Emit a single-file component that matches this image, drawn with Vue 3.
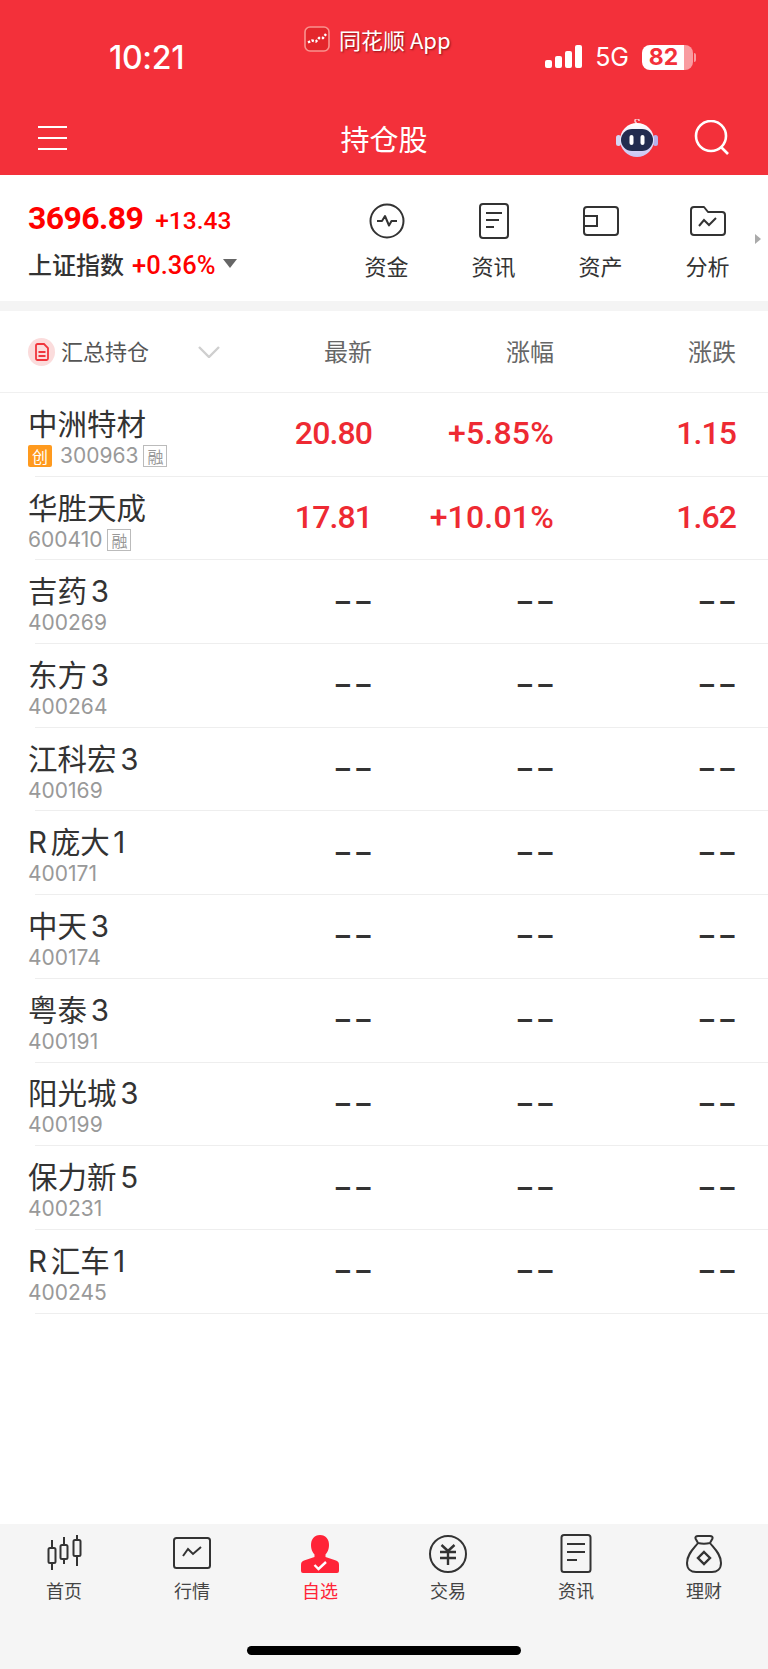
<template>
  <div class="page">
    <!-- 顶部红色区域 -->
    <header class="top">
      <div class="status">
        <span class="time">10:21</span>
        <div class="status-right">
          <svg width="38" height="24" viewBox="0 0 38 24">
            <rect x="0" y="15" width="7" height="8" rx="2" fill="#fff" />
            <rect x="10" y="11" width="7" height="12" rx="2" fill="#fff" />
            <rect x="20" y="6" width="7" height="17" rx="2" fill="#fff" />
            <rect x="30" y="0" width="7" height="23" rx="2" fill="#fff" />
          </svg>
          <span class="net">5G</span>
          <div class="battery">
            <div class="battery-body"><span class="battery-num">82</span></div>
            <i class="battery-cap"></i>
          </div>
        </div>
      </div>
      <div class="from-app">
        <svg width="26" height="26" viewBox="0 0 26 26">
          <rect x="1" y="1" width="24" height="24" rx="5" fill="#e4262c" stroke="#f9938f" stroke-width="1.6" />
          <path d="M4 16.5 8 14.5 12 15.5 15 12 19 12 22 8" fill="none" stroke="#fff" stroke-width="2.4" stroke-dasharray="2.4 1.6" />
        </svg>
        <span>同花顺 App</span>
      </div>
      <div class="nav">
        <div class="menu"><i></i><i></i><i></i></div>
        <div class="title">持仓股</div>
        <div class="nav-right">
          <svg width="42" height="38" viewBox="0 0 42 38">
            <defs>
              <linearGradient id="robotShell" x1="0" y1="0" x2="0" y2="1">
                <stop offset="0" stop-color="#ffffff" />
                <stop offset="1" stop-color="#c9c6f3" />
              </linearGradient>
            </defs>
            <path d="M20 6V3.5A2 2 0 1 1 23 2" fill="none" stroke="#f6c4cc" stroke-width="1.6" />
            <rect x="0" y="16" width="5" height="11" rx="2.5" fill="#d5d6f5" />
            <rect x="37" y="16" width="5" height="11" rx="2.5" fill="#b7b1ea" />
            <circle cx="21" cy="21" r="17" fill="url(#robotShell)" />
            <rect x="5" y="10" width="32" height="22" rx="11" fill="#222c4f" />
            <rect x="13.5" y="16" width="4" height="10" rx="2" fill="#fff" />
            <rect x="24.5" y="16" width="4" height="10" rx="2" fill="#fff" />
          </svg>
          <svg width="36" height="36" viewBox="0 0 36 36" fill="none" stroke="#fff" stroke-width="2.6">
            <circle cx="17" cy="16" r="15" />
            <path d="M27 27 34 34" />
          </svg>
        </div>
      </div>
    </header>

    <!-- 指数和快捷入口 -->
    <section class="index-panel">
      <div class="index">
        <div class="index-top">
          <span class="index-val">3696.89</span>
          <span class="index-diff">+13.43</span>
        </div>
        <div class="index-bottom">
          <span class="index-name">上证指数</span>
          <span class="index-pct">+0.36%</span>
          <i class="tri"></i>
        </div>
      </div>
      <div class="shortcuts">
        <div class="shortcut">
          <div class="shortcut-icon">
            <svg width="36" height="36" viewBox="0 0 36 36" fill="none" stroke="#333" stroke-width="2">
              <circle cx="18" cy="18" r="16.5" />
              <path d="M8 18H13L16 13 20 22.500 22.500 18H28" stroke-linejoin="round" />
            </svg>
          </div>
          <span>资金</span>
        </div>
        <div class="shortcut">
          <div class="shortcut-icon">
            <svg width="30" height="36" viewBox="0 0 30 36" fill="none" stroke="#333" stroke-width="2">
              <rect x="1" y="1" width="28" height="34" rx="3" />
              <path d="M7 10H23M7 17H20M7 24H15" />
            </svg>
          </div>
          <span>资讯</span>
        </div>
        <div class="shortcut">
          <div class="shortcut-icon">
            <svg width="36" height="32" viewBox="0 0 36 32" fill="none" stroke="#333" stroke-width="2">
              <rect x="1" y="2" width="34" height="28" rx="3" />
              <path d="M1 11H14V21H1" />
            </svg>
          </div>
          <span>资产</span>
        </div>
        <div class="shortcut">
          <div class="shortcut-icon">
            <svg width="36" height="30" viewBox="0 0 36 30" fill="none" stroke="#333" stroke-width="2">
              <path d="M1 4A3 3 0 0 1 4 1H14L18 6H32A3 3 0 0 1 35 9V26A3 3 0 0 1 32 29H4A3 3 0 0 1 1 26Z" stroke-linejoin="round" />
              <path d="M9 20 14 14 19 19 26 12" />
            </svg>
          </div>
          <span>分析</span>
        </div>
        <i class="more"></i>
      </div>
    </section>

    <div class="band"></div>

    <!-- 列表 -->
    <main class="list">
      <div class="head row-grid">
        <div class="head-left">
          <span class="doc">
            <svg width="14" height="18" viewBox="0 0 14 18" fill="none" stroke="#f0353c" stroke-width="1.800">
              <path d="M1 2.500A1.500 1.500 0 0 1 2.500 1H9L13 5V15.500A1.500 1.500 0 0 1 11.500 17H2.500A1.500 1.500 0 0 1 1 15.500Z" />
              <path d="M3.500 9H10.500M3.500 13H10.500" />
            </svg>
          </span>
          <span class="head-name">汇总持仓</span>
          <svg class="chev" width="22" height="12" viewBox="0 0 22 12" fill="none" stroke="#cfcfcf" stroke-width="2.400">
            <path d="M1 1 11 11 21 1" />
          </svg>
        </div>
        <span class="head-col">最新</span>
        <span class="head-col">涨幅</span>
        <span class="head-col">涨跌</span>
      </div>

      <div v-for="s in stocks" :key="s.code" class="row row-grid">
        <div class="stock">
          <div class="stock-name">{{ s.name }}</div>
          <div class="stock-sub">
            <span v-if="s.chuang" class="tag-chuang">创</span>
            <span class="stock-code">{{ s.code }}</span>
            <span v-if="s.rong" class="tag-rong">融</span>
          </div>
        </div>
        <template v-if="s.price">
          <span class="num">{{ s.price }}</span>
          <span class="num pct">{{ s.pct }}</span>
          <span class="num">{{ s.diff }}</span>
        </template>
        <template v-else>
          <span class="dash">––</span>
          <span class="dash">––</span>
          <span class="dash">––</span>
        </template>
      </div>
    </main>

    <!-- 底部导航 -->
    <footer class="tabbar">
      <div class="tabs">
        <div class="tab">
          <svg width="40" height="40" viewBox="0 0 40 40" fill="none" stroke="#333" stroke-width="2">
            <path d="M8 6V36M20 3V30M33 1V32" stroke-width="2" />
            <rect x="4.500" y="14" width="7" height="15" rx="1.500" fill="#f5f5f5" />
            <rect x="16.500" y="11" width="7" height="14" rx="1.500" fill="#f5f5f5" />
            <rect x="29.500" y="6" width="7" height="16" rx="1.500" fill="#f5f5f5" />
          </svg>
          <span>首页</span>
        </div>
        <div class="tab">
          <svg width="40" height="40" viewBox="0 0 40 40" fill="none" stroke="#333" stroke-width="2">
            <rect x="2" y="4" width="36" height="30" rx="2.500" />
            <path d="M11 22 16 15 21 20 29 13" />
          </svg>
          <span>行情</span>
        </div>
        <div class="tab tab-on">
          <svg width="40" height="40" viewBox="0 0 40 40">
            <path d="M20 1C26 1 29 5.500 29 11 29 16 27 18.500 25.500 20.500V23L36 26.500C38 27.200 39 28.500 39 31V37A2 2 0 0 1 37 39H3A2 2 0 0 1 1 37V31C1 28.500 2 27.200 4 26.500L14.500 23V20.500C13 18.500 11 16 11 11 11 5.500 14 1 20 1Z" fill="#ff2337" />
            <path d="M14.500 31 18.500 35 26 28" fill="none" stroke="#fff" stroke-width="2.400" />
          </svg>
          <span>自选</span>
        </div>
        <div class="tab">
          <svg width="40" height="40" viewBox="0 0 40 40" fill="none" stroke="#333" stroke-width="2">
            <circle cx="20" cy="20" r="18" />
            <path d="M13.500 11 20 17 26.500 11M12 18H28M12 24H28M20 17V31" stroke-width="2.400" />
          </svg>
          <span>交易</span>
        </div>
        <div class="tab">
          <svg width="40" height="40" viewBox="0 0 40 40" fill="none" stroke="#333" stroke-width="2">
            <rect x="5.500" y="1" width="29" height="37" rx="2.500" />
            <path d="M11 10H29M11 18H29M11 26H21" />
          </svg>
          <span>资讯</span>
        </div>
        <div class="tab">
          <svg width="40" height="40" viewBox="0 0 40 40" fill="none" stroke="#333" stroke-width="2">
            <path d="M14 9C10 14 3 20 3 29 3 35 7 38 12 38H28C33 38 37 35 37 29 37 20 30 14 26 9" />
            <path d="M14 9 11.500 4.500C11 3 12 2 14 2H26C28 2 29 3 28.500 4.500L26 9C22 10 18 10 14 9Z" />
            <path d="M20 18 26 24 20 30 14 24Z" stroke-width="2.400" />
          </svg>
          <span>理财</span>
        </div>
      </div>
      <div class="home-bar"></div>
    </footer>
  </div>
</template>

<script setup>
const stocks = [
  { name: '中洲特材', code: '300963', chuang: true, rong: true, price: '20.80', pct: '+5.85%', diff: '1.15' },
  { name: '华胜天成', code: '600410', rong: true, price: '17.81', pct: '+10.01%', diff: '1.62' },
  { name: '吉药3', code: '400269' },
  { name: '东方3', code: '400264' },
  { name: '江科宏3', code: '400169' },
  { name: 'R庞大1', code: '400171' },
  { name: '中天3', code: '400174' },
  { name: '粤泰3', code: '400191' },
  { name: '阳光城3', code: '400199' },
  { name: '保力新5', code: '400231' },
  { name: 'R汇车1', code: '400245' }
]
</script>

<style>
html, body {
  margin: 0;
  background: #fff;
}
</style>

<style scoped>
.page {
  position: relative;
  display: flex;
  flex-direction: column;
  height: 1669px;
  overflow: hidden;
  background: #fff;
  color: #333;
  font-family: "Noto Sans CJK SC", "Noto Sans", sans-serif;
}

.top {
  position: relative;
  height: 175px;
  flex: none;
  background: #f3303a;
  color: #fff;
}

.status {
  display: flex;
  justify-content: space-between;
  align-items: center;
  height: 40px;
  padding: 37px 72px 0 109px;
}
.time {
  font-family: Inter, sans-serif;
  font-size: 32px;
  font-weight: 500;
  letter-spacing: -0.3px;
}
.status-right {
  display: flex;
  align-items: center;
}
.net {
  margin: 0 13px 0 12px;
  font-family: Inter, sans-serif;
  font-size: 25px;
}
.battery {
  display: flex;
  align-items: center;
}
.battery-body {
  width: 51px;
  height: 25px;
  border-radius: 8px;
  background: linear-gradient(90deg, #fff 0, #fff 82%, #f99ba0 82%);
  text-align: center;
}
.battery-num {
  display: block;
  padding-right: 8px;
  color: #f3303a;
  font-family: Inter, sans-serif;
  font-size: 23px;
  font-weight: 700;
  line-height: 25px;
}
.battery-cap {
  width: 2px;
  height: 9px;
  margin-left: 1px;
  border-radius: 0 2px 2px 0;
  background: #f99ba0;
}

.from-app {
  position: absolute;
  top: 26px;
  left: 304px;
  display: flex;
  align-items: center;
  gap: 9px;
  font-size: 22px;
  line-height: 26px;
  text-shadow: 1px 1px 2px rgba(70, 0, 0, 0.6);
}

.nav {
  position: relative;
  display: flex;
  justify-content: space-between;
  align-items: center;
  height: 60px;
  margin-top: 31px;
  padding: 0 38px;
}
.menu {
  display: flex;
  flex-direction: column;
  gap: 9px;
  width: 29px;
}
.menu i {
  display: block;
  height: 2px;
  background: #fff;
}
.title {
  position: absolute;
  left: 0;
  right: 0;
  text-align: center;
  font-size: 29px;
  line-height: 40px;
}
.nav-right {
  display: flex;
  align-items: center;
  gap: 36px;
}

.index-panel {
  display: flex;
  justify-content: space-between;
  height: 126px;
  flex: none;
}
.index {
  padding: 23px 0 0 28px;
}
.index-top {
  display: flex;
  align-items: baseline;
  gap: 12px;
  color: #f00;
  font-family: Roboto, sans-serif;
}
.index-val {
  font-size: 32px;
  font-weight: 700;
  line-height: 40px;
  letter-spacing: -0.6px;
}
.index-diff {
  font-size: 24.500px;
  font-weight: 500;
}
.index-bottom {
  display: flex;
  align-items: center;
  margin-top: 7px;
  height: 36px;
}
.index-name {
  font-size: 24px;
  font-weight: 500;
}
.index-pct {
  margin: 3px 0 0 8px;
  color: #f00;
  font-family: Roboto, sans-serif;
  font-size: 25.500px;
  font-weight: 500;
}
.tri {
  width: 0;
  height: 0;
  margin: 0 0 0 7px;
  border-left: 7px solid transparent;
  border-right: 7px solid transparent;
  border-top: 9px solid #666;
}

.shortcuts {
  position: relative;
  display: flex;
  padding: 28px 7px 0 0;
  width: 435px;
  box-sizing: border-box;
}
.shortcut {
  display: flex;
  flex-direction: column;
  align-items: center;
  flex: 1;
  font-size: 22px;
  color: #333;
}
.shortcut-icon {
  display: flex;
  justify-content: center;
  align-items: center;
  height: 36px;
  margin-bottom: 10px;
}
.shortcut span {
  line-height: 32px;
}
.more {
  position: absolute;
  top: 59px;
  right: 7px;
  width: 0;
  height: 0;
  border-top: 5px solid transparent;
  border-bottom: 5px solid transparent;
  border-left: 6px solid #aaa;
}

.band {
  height: 10px;
  flex: none;
  background: #f4f4f4;
}

.list {
  flex: 1;
}
.row-grid {
  display: grid;
  grid-template-columns: minmax(0, 1fr) 182px 182px 182px;
  align-items: center;
  padding: 0 32px 0 28px;
  box-sizing: border-box;
}
.head {
  height: 82px;
  border-bottom: 1px solid #f0f0f0;
}
.head-left {
  display: flex;
  align-items: center;
  white-space: nowrap;
}
.doc {
  display: flex;
  flex: none;
  justify-content: center;
  align-items: center;
  width: 27px;
  height: 28px;
  border-radius: 50%;
  background: #fbdcdc;
}
.head-name {
  margin: 0 0 3px 6px;
  font-size: 22px;
  color: #555;
}
.chev {
  flex: none;
  margin-left: 49px;
}
.head-col {
  margin-bottom: 3px;
  text-align: right;
  font-size: 24px;
  color: #666;
}

.row {
  position: relative;
  height: 83.7px;
}
.row::after {
  content: "";
  position: absolute;
  left: 35px;
  right: 0;
  bottom: 0;
  height: 1px;
  background: #eeeeee;
}
.stock {
  padding-top: 2px;
}
.stock-name {
  font-family: Inter, "Noto Sans CJK SC", sans-serif;
  font-size: 29.500px;
  line-height: 40px;
  color: #333;
  white-space: nowrap;
  text-autospace: normal;
}
.stock-sub {
  display: flex;
  align-items: center;
  height: 24px;
}
.stock-code {
  font-family: Inter, sans-serif;
  font-size: 21px;
  color: #999;
  line-height: 24px;
}
.tag-chuang,
.tag-rong {
  display: flex;
  justify-content: center;
  align-items: center;
  box-sizing: border-box;
  width: 24px;
  height: 22px;
  font-size: 16px;
  line-height: 1;
}
.tag-chuang {
  margin-right: 8px;
  border-radius: 2px;
  background: #ff9a1e;
  color: #fff;
}
.tag-rong {
  margin-left: 5px;
  border: 1px solid #bbb;
  color: #999;
}
.num {
  margin-bottom: 4px;
  text-align: right;
  color: #ee2a33;
  font-family: Roboto, sans-serif;
  font-size: 32px;
  font-weight: 500;
  letter-spacing: -0.9px;
}
.num.pct {
  letter-spacing: 0.2px;
}
.dash {
  margin-right: -3px;
  text-align: right;
  color: #333;
  font-family: Roboto, sans-serif;
  font-size: 28px;
  font-weight: 700;
  letter-spacing: 3px;
}

.tabbar {
  position: relative;
  height: 145px;
  flex: none;
  background: #f5f5f5;
}
.tabs {
  display: grid;
  grid-template-columns: repeat(6, 1fr);
  padding-top: 10px;
}
.tab {
  display: flex;
  flex-direction: column;
  align-items: center;
  font-size: 18px;
  color: #444;
}
.tab span {
  line-height: 26px;
  margin-top: 3px;
}
.tab-on {
  color: #ff2337;
}
.home-bar {
  position: absolute;
  left: 247px;
  bottom: 14px;
  width: 274px;
  height: 9px;
  border-radius: 5px;
  background: #000;
}
</style>
